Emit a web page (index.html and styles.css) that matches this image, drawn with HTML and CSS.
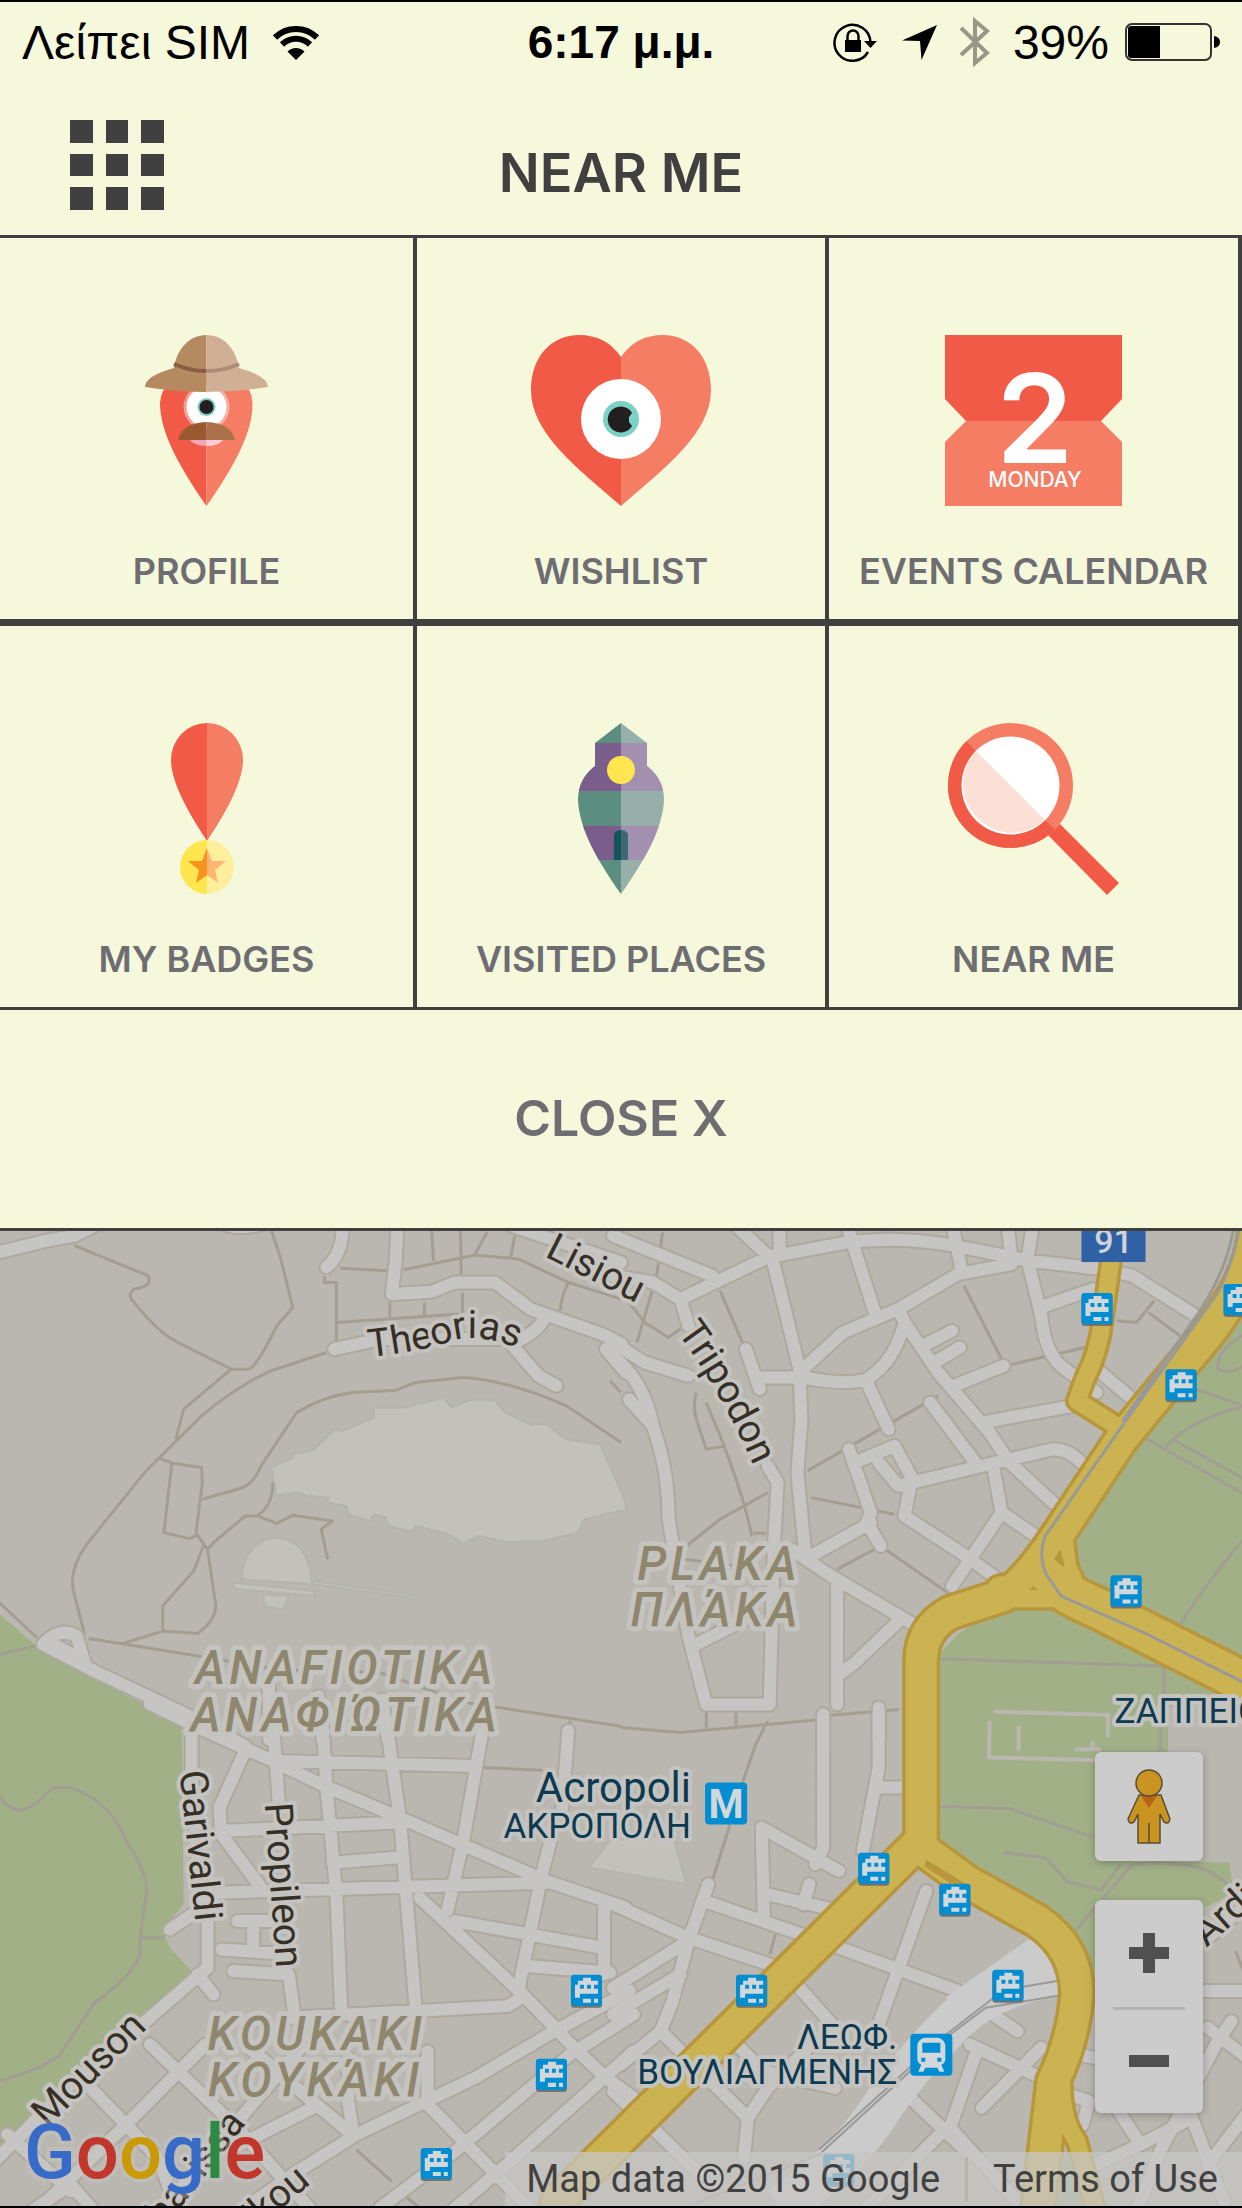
FILE: index.html
```html
<!DOCTYPE html>
<html lang="el">
<head>
<meta charset="utf-8">
<meta name="viewport" content="width=device-width, initial-scale=1">
<title>Near me</title>
<link rel="stylesheet" href="styles.css">
</head>
<body>
<div class="app">
  <div class="status">
    <div class="status-left">
      <span>Λείπει SIM</span>
      <svg class="wifi" width="48" height="36" viewBox="0 0 48 36" aria-hidden="true">
        <path d="M3 13.500A30 30 0 0 1 45 13.500M10 20.500A20 20 0 0 1 38 20.500" fill="none" stroke="#000" stroke-width="6"/>
        <path d="M24 36L15.500 27.500A12 12 0 0 1 32.500 27.500Z"/>
      </svg>
    </div>
    <div class="status-time">6:17 μ.μ.</div>
    <div class="status-right">
      <svg width="45" height="40" viewBox="0 0 45 40" aria-hidden="true">
        <path d="M35 30A18 18 0 1 1 37.500 20" fill="none" stroke="#000" stroke-width="2.500"/>
        <path d="M31 19H44L37.500 26Z"/>
        <rect x="12" y="18" width="16" height="12"/>
        <path d="M14.500 19V14a5.500 5.500 0 0 1 11 0V19" fill="none" stroke="#000" stroke-width="2.500"/>
      </svg>
      <svg class="arrow" width="35" height="35" viewBox="0 0 35 35" aria-hidden="true"><path d="M35 0L19.500 35L18 16L0 15.500Z"/></svg>
      <svg class="bt" width="32" height="54" viewBox="0 0 32 54" aria-hidden="true"><path d="M2 13L28 38L16 48V6L28 16L2 40" fill="none" stroke="#98988a" stroke-width="4"/></svg>
      <span>39%</span>
      <svg class="battery" width="95" height="38" viewBox="0 0 95 38" aria-hidden="true">
        <rect x="1" y="1" width="85" height="36" rx="6" fill="none" stroke="#333" stroke-width="2"/>
        <path d="M6 3H35V35H6Q3 35 3 32V6Q3 3 6 3ZM89 13Q95 14 95 19T89 25Z"/>
      </svg>
    </div>
  </div>

  <header class="header">
    <button class="menu-button" type="button" aria-label="Menu">
      <svg width="94" height="90" viewBox="0 0 94 90" fill="#404040" aria-hidden="true">
        <path d="M0 0h23v23H0zM36 0h22v23H36zM71 0h23v23H71zM0 34h23v22H0zM36 34h22v22H36zM71 34h23v22H71zM0 67h23v23H0zM36 67h22v23H36zM71 67h23v23H71z"/>
      </svg>
    </button>
    <h1>NEAR ME</h1>
  </header>

  <nav class="tiles">
    <a class="tile" href="#profile">
      <svg width="123" height="172" viewBox="0 0 123 172" aria-hidden="true">
        <path d="M61.500 171C35 133 15 98 15 68Q16 40 61.500 40Z" fill="#f15a47"/>
        <path d="M61.500 171C88 133 108 98 107.500 68Q107 40 61.500 40Z" fill="#f47d63"/>
        <circle cx="61.500" cy="72" r="23" fill="#fff" opacity=".4"/><circle cx="61.500" cy="72" r="20" fill="#fff"/>
        <circle cx="61.500" cy="72" r="9" fill="#7accbc"/><circle cx="61.500" cy="72" r="7" fill="#231f20"/>
        <path d="M44 104H79Q74 111 61.500 111T44 104Z" fill="#f3a6b8"/><path d="M61.500 104H79Q74 111 61.500 111Z" fill="#f8cdd6"/>
        <path d="M33 105Q37 88 61.500 87V105Z" fill="#995a30"/><path d="M90 105Q86 88 61.500 87V105Z" fill="#ab714b"/>
        <path d="M61.500 0C44 0 32 14 29 33Q0 41 0 52Q30 57 61.500 57Z" fill="#b68a60"/>
        <path d="M61.500 0C79 0 91 14 94 33Q123 41 123 52Q93 57 61.500 57Z" fill="#d0b094"/>
        <path d="M29 29Q44 36 61.500 36" fill="none" stroke="#8b5b46" stroke-width="4"/><path d="M61.500 36Q79 36 94 29" fill="none" stroke="#b08b7a" stroke-width="4"/>
      </svg>
      <span>PROFILE</span>
    </a>
    <a class="tile" href="#wishlist">
      <svg width="180" height="172" viewBox="0 0 180 172" aria-hidden="true">
        <path d="M90 171C45 132 0 98 0 55C0 20 22 0 48 0Q75 0 90 22Z" fill="#f15a47"/>
        <path d="M90 171C135 132 180 98 180 55C180 20 158 0 132 0Q105 0 90 22Z" fill="#f47d63"/>
        <circle cx="90" cy="84" r="40" fill="#fff"/><circle cx="90" cy="84" r="18" fill="#7ad2c5"/>
        <path d="M101 78A13 13 0 1 0 101 91L98 87V82Z" fill="#231f20"/>
      </svg>
      <span>WISHLIST</span>
    </a>
    <a class="tile" href="#events">
      <svg width="177" height="172" viewBox="0 0 177 172" aria-hidden="true">
        <path d="M0 0H177V64L156 86H21L0 64Z" fill="#f15a47"/><path d="M21 86H156L177 107V171H0V107Z" fill="#f47d63"/>
        <text class="date-number" x="90" y="128">2</text><text class="date-day" x="90" y="152">MONDAY</text>
      </svg>
      <span>EVENTS CALENDAR</span>
    </a>
    <a class="tile" href="#badges">
      <svg width="72" height="172" viewBox="0 0 72 172" aria-hidden="true">
        <path d="M36 118C16 88 0 58 0 37A36 37 0 0 1 36 0Z" fill="#f15a47"/><path d="M36 118C56 88 72 58 72 37A36 37 0 0 0 36 0Z" fill="#f47d63"/>
        <path d="M36 117A27 27 0 0 0 36 171Z" fill="#ffe54e"/><path d="M36 117A27 27 0 0 1 36 171Z" fill="#ffee9b"/>
        <path d="M36 125V152L25 160L28 147L17 138H31Z" fill="#f7921e"/><path d="M36 125V152L47 160L44 147L55 138H41Z" fill="#fcb673"/>
      </svg>
      <span>MY BADGES</span>
    </a>
    <a class="tile" href="#visited">
      <svg width="86" height="172" viewBox="0 0 86 172" aria-hidden="true">
        <defs><clipPath id="tower"><path d="M43 0L69 20V43Q86 56 86 77C85 106 65 140 43 171C21 140 1 106 0 77Q0 56 17 43V20Z"/></clipPath></defs>
        <g clip-path="url(#tower)">
          <path d="M0 0H43V172H0Z" fill="#5b8d80"/><path d="M43 0H86V172H43Z" fill="#97afa9"/>
          <path d="M0 20H43V68H0ZM0 103H43V137H0Z" fill="#7b5d8c"/><path d="M43 20H86V68H43ZM43 103H86V137H43Z" fill="#a38fb0"/>
        </g>
        <circle cx="43" cy="47" r="14" fill="#ffe54e"/><path d="M36 137V112Q37 107 43 107V137Z" fill="#14535d"/><path d="M50 137V112Q49 107 43 107V137Z" fill="#3d6974"/>
      </svg>
      <span>VISITED PLACES</span>
    </a>
    <a class="tile" href="#near">
      <svg width="171" height="172" viewBox="0 0 171 172" aria-hidden="true">
        <path d="M112 101L171 160L159 172L100 112Z" fill="#f15a47"/>
        <circle cx="62.500" cy="62.500" r="62.500" fill="#f47d63"/><path d="M18.300 18.300A62.500 62.500 0 0 0 106.700 106.700Z" fill="#f15a47"/>
        <circle cx="62.500" cy="62.500" r="49" fill="#fff"/><path d="M27.900 27.900A49 49 0 0 0 97.100 97.100Z" fill="#fde0d5"/>
      </svg>
      <span>NEAR ME</span>
    </a>
  </nav>

  <button class="close" type="button">CLOSE X</button>

  <section class="map" aria-label="Map">
    <svg class="map-canvas" viewBox="0 0 1242 974" preserveAspectRatio="xMidYMin slice">
      <defs>
        <g id="roads">
          <g transform="translate(0 -12) scale(.39605 .33333)">
            <path d="M-20 105L120 65L190 50L290 -10M560 10Q600 40 680 10M865 0C870 80 850 120 825 145M1005 0L1000 120L990 225L1090 218L1150 190H1250L1340 270L1520 345L1570 375M1375 290Q1370 330 1300 370M845 390L960 360L1280 360L1360 470L1405 500M1290 20L1568 130M1530 390L1580 460"/>
            <path d="M215 1330L195 1250Q150 1220 110 1275L240 1355L480 1490L620 1580M130 1270L190 1310"/>
            <path d="M680 1400V1560M805 1430L815 1560M965 1440L980 1560"/>
          </g>
          <g transform="translate(621 -12) scale(.39605 .33333)">
            <path d="M-20 50L230 170M290 20L370 110M400 0V100M-20 170L80 190L150 240L370 115L570 70Q700 50 840 80L1030 125L1210 150L1290 170L1450 290M570 20L640 280M835 10L860 160M975 20L985 120M1040 10L1025 120L1060 290Q1070 410 1120 450L1200 520M380 110L450 450L455 600L445 760L465 1010M150 240L170 320M-20 370L60 430L170 470M450 460L560 340L700 270L850 165L985 135M700 270L715 310L800 460L930 640L980 730L1090 850M715 310Q690 430 620 480Q570 500 460 475L350 475M315 390L350 510M770 375L835 335M790 430L855 385M840 500L965 440M620 490L675 630M780 550L900 740M910 610L1140 560M575 690L630 880L620 910L655 980M590 730L690 680L740 790M650 730L700 800L980 720L1090 690Q1130 690 1160 730M730 800L715 890L870 1010L950 1080M940 750L960 880L1040 945M960 880L835 1100M480 1010L630 910M1070 260L1190 210M1210 460L1280 530M-20 410Q60 490 80 620L20 540M80 620Q120 750 120 900L170 1250L215 1455H375L385 1000L395 790L370 740M430 990L530 1070L745 1220M545 1090V1455M545 1370L590 1330L700 1205M180 1280L330 1190M510 1500V1600M650 1480V1560"/>
          </g>
          <g transform="translate(0 476) scale(.39605 .33333)">
            <path d="M380 -10L520 70L690 160L820 235L1000 325L1380 520L1580 600M485 50V200L500 450L525 620V780L360 950L180 1130L-20 1370M690 40L705 290M620 130L555 300L560 380L660 540M700 160L1200 175M815 40L825 240L850 560L862 900M975 40L1010 330L1050 900M1220 60L1170 400L1130 610M560 370L1000 345M840 465L1000 450M550 555L1380 525M430 665L500 610M500 800L540 860M600 640H700M640 640V720M560 725L740 740M590 790L730 800L745 930M730 930L1280 895Q1330 870 1310 840L1360 550M1060 570L1320 860L1450 1020L1530 1110L1600 1170M1150 640L1520 720M1330 775L1540 795M1435 70L1420 300M1390 400L1360 540M1525 600V800M1590 850L1400 970L1200 1110L900 1280L740 1400L620 1500M1600 920L1440 1040L1150 1330L960 1500M1600 1030L1270 1380L1140 1510M380 1010L600 1260L790 1510M520 1010L320 1250L120 1480M230 1140L400 1350L450 1510M640 1030L800 1190L890 1280M880 1050V1180L890 1260M760 1020L450 1450M590 1320L790 1200M1080 1030V1190L1370 1540M180 1430L240 1510M20 1280L180 1450M180 1430L80 1510"/>
          </g>
          <g transform="translate(621 476) scale(.39605 .33333)">
            <path d="M510 20V420L490 470M650 0V180L610 430M650 240H720M550 490L355 360L360 620M370 560L550 610M475 530L460 590M220 530L170 700L130 880L100 970L0 1070M-20 590L170 690L400 780M210 580L480 690M170 700L-20 840M150 800L-20 920M100 970L320 1230L310 1350M320 1230L370 1140L480 1010M-20 1150L40 1220M80 1260L200 1400M770 550L650 950M550 720L850 850L1000 970M450 840L540 960M300 1020L360 1090L540 1140M900 1020L830 1260L1000 1480M910 1200L1060 1020M730 1170L880 1340M820 1260L620 1500M880 1010L1060 1110M1130 1160L1180 1180L1165 1250M1150 1040L1240 1060M1470 700L1570 600M1440 850H1590M1540 940L1500 1010L1360 1330L1300 1510M1480 960L1590 1060M1250 1200L1310 1310L1180 1380M1310 1310L1440 1230L1520 1480M1590 1200L1480 1370"/>
          </g>
        </g>
        <g id="main-roads">
          <g transform="translate(621 -12) scale(.39605 .33333)">
            <path class="wide" d="M1600 30C1590 150 1550 230 1490 330L1400 460L1262 660L1100 950Q1010 1110 960 1130L830 1180Q755 1230 757 1330V1870"/>
            <path class="wide" d="M960 1117H1130L1180 1150"/>
            <path class="wide" d="M1100 960L1110 1050L1145 1140"/>
            <path class="broad" d="M1110 1110Q1150 1140 1200 1165L1600 1405"/>
            <path class="narrow" d="M1240 90L1215 300Q1205 400 1170 480L1150 545L1250 620"/>
          </g>
          <g transform="translate(621 476) scale(.39605 .33333)">
            <path class="wide" d="M755 400L-160 1480"/>
            <path class="wide" d="M755 420L870 520L1050 640Q1150 720 1150 860Q1140 1000 1090 1120L1050 1520"/>
            <path class="narrow" d="M1115 1050Q1100 1220 1150 1300L1200 1520"/>
          </g>
        </g>
        <g id="tram">
          <rect width="31" height="32" y="1" rx="3" fill="#75736e"/><rect width="31" height="31" rx="3" fill="#008dd2"/>
          <path fill="#d2d8da" fill-rule="evenodd" d="M12 3h8v3h7v13H9v4H4V10h3V6h5zM9 10v4h4v-4zM16 10v4h4v-4zM23 10v4h4v-4zM12 24h8v4h-8zM23 24h4v4h-4z"/>
        </g>
      </defs>
      <rect width="1242" height="974" fill="#bab7b0"/>
      <g fill="#a1b087">
        <path transform="translate(0 476) scale(.39605 .33333)" d="M-10 -290L90 -189L130 -155L460 50L465 590L410 665L430 720L485 790L360 930L60 1260L-10 1350Z"/>
        <path transform="translate(621 -12) scale(.39605 .33333)" d="M1580 260L1290 690L1135 930L1150 1050L1180 1100L1580 1360Z"/>
        <path transform="translate(621 476) scale(.39605 .33333)" d="M780 -130L850 -220L980 -320L1130 -320L1560 -45L1380 0V460L1535 465L1545 560L1470 600L1200 800L1130 650L780 400ZM1085 1230L1180 1500H1070Z"/>
      </g>
      <g class="building">
        <path transform="translate(0 -12) scale(.39605 .33333)" d="M685 745L740 715V705L790 695L845 630L865 635L945 595V565H1020L1120 535L1140 565L1190 542H1250L1275 580L1340 615H1380L1430 660L1515 675L1570 820L1585 870L1530 885L1475 900L1460 940L1370 965L1280 968L1210 950L1170 972L1125 942L1050 920L1040 937L980 920L975 895L945 885L935 905L880 885L875 860L830 850V835L775 830L755 820L700 828ZM610 1080Q620 960 700 955Q780 960 790 1095ZM592 1090L795 1115V1130L592 1108ZM790 1085L1060 1130V1138L790 1095ZM665 1125L730 1130L715 1170L670 1160Z"/>
        <path transform="translate(621 476) scale(.39605 .33333)" d="M-30 400L130 380L165 530L-80 480Z"/>
      </g>
      <g class="paths">
        <g transform="translate(0 -12) scale(.39605 .33333)">
          <path d="M190 80L375 170Q390 200 340 210Q320 230 340 250Q400 340 450 370L585 450H630Q650 440 700 320L740 265L710 120L685 30M585 450L465 570L445 660M820 170V190H850V390M825 400L685 455Q600 500 510 590L370 755L220 975Q170 1060 190 1130L215 1245M400 715L440 733L510 745L512 790L495 950L480 958L415 940L435 733M512 840L600 810Q640 800 660 740L750 580Q820 530 890 520L1000 513L1050 490L1170 475Q1290 485 1430 560L1568 670M690 790Q690 860 650 890H620L545 965L525 990L495 940M650 890L700 912L740 888L840 905L812 930L828 1020M515 980L490 1055L412 1160V1235L500 1242Q550 1200 545 1150L525 990M412 1235L310 1273L225 1257M310 1273L500 1310L700 1350L960 1360L1180 1450L1568 1520M0 1150L95 1255M0 1305L90 1280M860 148L980 155M1020 152L1200 108L1310 120L1435 190L1568 240M1090 30L1095 125M1163 30L1165 165M1230 40L1200 105M1300 50L1290 115M1435 190Q1415 240 1415 275M850 310L1160 285M985 250V300M1072 250V290M1168 220V280M1540 485L1568 520"/>
        </g>
        <g transform="translate(621 -12) scale(.39605 .33333)">
          <path d="M105 40L90 170L40 370M0 220L60 310L120 355L150 330M250 215L310 380M190 520Q180 560 190 600L215 690L265 680M215 550L250 650Q310 830 330 950M370 820L250 900L165 980M335 942H365M160 1020L350 1050M480 835L690 885M470 755L800 530M545 1050L655 980L830 1125M865 200L960 420M970 440L1170 385M1250 305L1300 310L1345 245M1330 280L1410 350M1320 655L1580 830M1390 660L1590 790M1370 690Q1420 610 1570 560L1450 510M1580 340Q1500 390 1505 450Q1540 470 1580 430M1580 950Q1520 1020 1410 1215M800 1318L1370 1340V1430M500 1490L700 1470"/>
        </g>
        <g transform="translate(0 476) scale(.39605 .33333)">
          <path d="M0 265Q40 340 100 280L135 240H180Q280 280 320 400Q380 510 370 560L355 690V740Q340 800 240 885L150 1045Q110 1080 0 1120M355 690H415M1220 180L1370 188M1440 40L1435 70M900 1325L990 1420M1020 1460L1060 1500"/>
        </g>
        <g transform="translate(621 476) scale(.39605 .33333)">
          <path d="M0 60L150 75L510 35M215 0V60M290 10V55M370 40L340 110L305 230M275 350L230 520M390 680L375 740M800 297L980 303L1195 390M965 435L1070 450L1125 520L1210 548L1260 470M1145 670L1290 470Q1480 450 1535 540M1360 40V130M1550 730L1590 850"/>
        </g>
      </g>
      <path class="grounds" transform="translate(621 476) scale(.39605 .33333)" d="M940 12L1228 22V90M930 40L928 150L1210 158M1003 55V130M1145 125H1210M1190 100V130"/>
      <use href="#roads" class="casing"/>
      <use href="#roads" class="street"/>
      <g transform="translate(621 476) scale(.39605 .33333)">
        <path class="yard" d="M1130 800Q950 820 850 930Q720 1080 640 1230Q560 1370 400 1500M1090 720L850 920"/>
        <path class="rail" d="M1000 840L1195 800M1195 845L920 900L830 980L500 1340L180 1490M1000 840L940 870L820 980L500 1325"/>
      </g>
      <use href="#main-roads" class="main-casing"/>
      <use href="#main-roads" class="main-street"/>
      <path transform="translate(621 -12) scale(.39605 .33333)" fill="#b8963c" d="M1108 990L1120 1045L1092 1020ZM1040 1100L1052 1112H1030ZM770 1920L880 2000L830 1990L765 1940Z"/>
      <g transform="translate(621 -12) scale(.39605 .33333)"><path class="rail tramline" d="M1560 30Q1530 180 1500 230L1270 610L1070 950Q1050 1010 1075 1070L1110 1130L1320 1240L1590 1400M1545 30Q1525 170 1440 310L1265 605"/></g>
      <rect x="1081" y="-10" width="64" height="41" fill="#2f61a4"/>
      <text class="route" x="1113" y="22">91</text>
      <use href="#tram" x="1081" y="62"/><use href="#tram" x="1223" y="53"/><use href="#tram" x="1165" y="138"/><use href="#tram" x="1110" y="344"/>
      <use href="#tram" x="858" y="621"/><use href="#tram" x="939" y="652"/><use href="#tram" x="736" y="743"/><use href="#tram" x="992" y="738"/><use href="#tram" x="823" y="922"/>
      <use href="#tram" x="571" y="743"/><use href="#tram" x="536" y="827"/><use href="#tram" x="421" y="916"/>
      <rect x="705" y="551" width="42" height="42" rx="4" fill="#008dd2"/><text class="metro" x="726" y="586">M</text>
      <g transform="translate(910 802)"><rect width="42" height="42" rx="4" fill="#008dd2"/><path fill="#d2d8da" fill-rule="evenodd" d="M14 4h14q7 2 7 9v12q0 4-4 6l3 7h-5l-2-4H15l-2 4H8l3-7q-4-2-4-6V13q0-7 7-9zM12 9v10h18V9zM11 24v4h4v-4zM27 24v4h4v-4z"/></g>

      <path id="theorias" d="M369 126Q425 120 452 110Q480 100 530 122" fill="none"/>
      <text class="street-name"><textPath href="#theorias">Theorias</textPath></text>
      <text class="street-name" transform="translate(544 25) rotate(27)">Lisiou</text>
      <path id="tripodon" d="M677 101Q728 170 764 260" fill="none"/>
      <text class="street-name"><textPath href="#tripodon">Tripodon</textPath></text>
      <text class="street-name" transform="translate(180 540) rotate(84)">Garivaldi</text>
      <text class="street-name" transform="translate(265 572) rotate(86)">Propileon</text>
      <text class="street-name" transform="translate(48 896) rotate(-45)">Mouson</text>
      <text class="street-name" transform="translate(256 998) rotate(-40)">ikou</text>
      <text class="street-name" transform="translate(165 996) rotate(-52)">ha&nbsp;&nbsp;issa</text>
      <text class="street-name" transform="translate(1206 716) rotate(-42)">Ardi</text>
      <g class="district">
        <text x="719" y="349">PLAKA</text><text x="716" y="395">ΠΛΆΚΑ</text>
        <text x="346" y="453">ANAFIOTIKA</text><text x="346" y="499">ΑΝΑΦΙΏΤΙΚΑ</text>
        <text x="317" y="818">KOUKAKI</text><text x="316" y="864">ΚΟΥΚΆΚΙ</text>
      </g>
      <g class="place">
        <text class="big" x="691" y="570">Acropoli</text><text x="691" y="606">ΑΚΡΟΠΟΛΗ</text>
        <text x="897" y="817">ΛΕΩΦ.</text><text x="897" y="852">ΒΟΥΛΙΑΓΜΕΝΗΣ</text>
        <text class="start" x="1114" y="491">ΖΑΠΠΕΙΟ</text>
      </g>
    </svg>

    <div class="map-controls">
      <button class="control pegman" type="button" aria-label="Street View">
        <svg width="44" height="76" viewBox="0 0 44 76" aria-hidden="true">
          <path d="M12 26L1 50Q2 56 7 53L11 45V74H33V45L37 53Q42 56 43 50L34 26Z" fill="#c99520" stroke="#594c32" stroke-width="1.500"/>
          <path d="M22 54V74" stroke="#594c32" stroke-width="1.500"/><path d="M14 27H30L22 39Z" fill="#b86318"/>
          <circle cx="22" cy="14" r="13" fill="#c99520" stroke="#594c32" stroke-width="1.500"/>
        </svg>
      </button>
      <div class="control zoom">
        <button type="button" aria-label="Zoom in"><svg width="40" height="40" viewBox="0 0 40 40"><path d="M14 0H26V14H40V26H26V40H14V26H0V14H14Z" fill="#505050"/></svg></button>
        <button type="button" aria-label="Zoom out"><svg width="40" height="12" viewBox="0 0 40 12"><path d="M0 0H40V12H0Z" fill="#505050"/></svg></button>
      </div>
    </div>
    <div class="google"><span class="blue">G</span><span class="red">o</span><span class="yellow">o</span><span class="blue">g</span><span class="green">l</span><span class="red">e</span></div>
    <div class="attribution"><span>Map data ©2015 Google</span><a href="#terms">Terms of Use</a></div>
  </section>
</div>
</body>
</html>
```
FILE: styles.css
```css
* { box-sizing: border-box; }

body { margin: 0; background: #f6f8dc; font-family: "Liberation Sans", sans-serif; }

button { padding: 0; border: 0; background: none; color: inherit; font: inherit; cursor: pointer; }
a { color: inherit; text-decoration: none; }
svg { display: block; }

.app { display: flex; flex-direction: column; min-height: 100vh; border-top: 2px solid #000; border-bottom: 2px solid #000; }

.status { display: grid; grid-template-columns: 1fr auto 1fr; align-items: center; height: 80px; padding: 0 22px; font-size: 48px; color: #000; }
.status-left, .status-right { display: flex; align-items: center; }
.status-left { gap: 22px; }
.status-time { font-size: 46px; font-weight: 700; }
.status-right { justify-content: flex-end; }
.arrow { margin: 0 22px 0 24px; }
.bt { margin-right: 22px; }
.battery { margin-left: 16px; }

.header { display: grid; grid-template-columns: 1fr auto 1fr; align-items: center; height: 153px; padding: 0 70px; }
.menu-button { justify-self: start; padding-top: 12px; }
.header h1 { margin: 0; padding-top: 28px; font: 600 54px/60px Inter, sans-serif; color: #404040; }

.tiles { display: grid; grid-template-columns: 417fr 412fr 413fr; border-top: 3px solid #404040; border-bottom: 3px solid #404040; }
.tile { display: flex; flex-direction: column; align-items: center; gap: 42px; height: 381px; padding-top: 97px; border-right: 4px solid #404040; font: 600 36px/44px Inter, sans-serif; color: #6e6d72; white-space: nowrap; }
.tile:nth-child(n+4) { height: 388px; border-top: 7px solid #404040; }
.date-number { font: 600 124px Inter, sans-serif; fill: #fff; text-anchor: middle; }
.date-day { font: 500 21px Inter, sans-serif; fill: #fff; text-anchor: middle; }

.close { height: 221px; padding-bottom: 2px; border-bottom: 3px solid #404040; font: 600 50px/60px Inter, sans-serif; color: #6e6d72; }

.map { position: relative; flex: 1; min-height: 400px; overflow: hidden; background: #bab7b0; }
.map-canvas { position: absolute; inset: 0; width: 100%; height: 100%; font-family: Roboto, sans-serif; }
.map-canvas path { vector-effect: non-scaling-stroke; }
.building { fill: #c2c2ba; stroke: #b4b4ae; stroke-width: 2px; }
.paths { fill: none; stroke: #a29e93; stroke-width: 3px; stroke-linejoin: round; }
.grounds { fill: none; stroke: #bab7b0; stroke-width: 4px; }
.casing, .street, .main-casing, .main-street { fill: none; stroke-linecap: round; stroke-linejoin: round; }
.casing { stroke: #ada99f; stroke-width: 16px; }
.street { stroke: #c7c5c3; stroke-width: 12px; }
.yard { fill: none; stroke: #cbcbcb; stroke-width: 42px; }
.rail { fill: none; stroke: #999; stroke-width: 2px; }
.tramline { stroke-width: 3px; }
.main-casing { stroke: #b8963c; --broad: 46px; --wide: 38px; --narrow: 24px; }
.main-street { stroke: #cbb351; --broad: 39px; --wide: 31px; --narrow: 17px; }
.broad { stroke-width: var(--broad); }
.wide { stroke-width: var(--wide); }
.narrow { stroke-width: var(--narrow); }

.map-canvas text { paint-order: stroke; stroke-linejoin: round; }
.street-name { font-size: 39px; fill: #362f26; stroke: #c5c3c0; stroke-width: 8px; }
.district { font-size: 47px; font-weight: 500; font-style: italic; letter-spacing: 4px; fill: #8f866e; stroke: #c5c3c0; stroke-width: 10px; text-anchor: middle; }
.place { font-size: 35px; fill: #0c3a50; stroke: #c5c3c0; stroke-width: 8px; text-anchor: end; }
.place .big { font-size: 42px; }
.place .start { text-anchor: start; }
.map-canvas .route { font-size: 34px; font-weight: 500; fill: #d0d4d8; text-anchor: middle; }
.map-canvas .metro { font-size: 40px; font-weight: 700; fill: #d2d8da; text-anchor: middle; }

.map-controls { position: absolute; right: 39px; bottom: 93px; display: flex; flex-direction: column; gap: 39px; width: 108px; }
.control { border-radius: 6px; background: #cccccc; box-shadow: 0 2px 8px rgba(0, 0, 0, .25); }
.pegman { display: grid; place-items: center; height: 109px; }
.zoom { display: grid; grid-template-rows: 1fr 1fr; height: 213px; padding: 0 18px; }
.zoom button { display: grid; place-items: center; }
.zoom button + button { border-top: 3px solid #b4b4b4; }

.google { position: absolute; left: 24px; bottom: 14px; font: 500 76px/80px Roboto, sans-serif; -webkit-text-stroke: 8px rgba(200, 198, 195, .4); paint-order: stroke; }
.blue { color: #376bc8; }
.red { color: #c1372b; }
.yellow { color: #ca9a05; }
.green { color: #2b8a43; }

.attribution { position: absolute; right: 0; bottom: 0; display: flex; align-items: center; gap: 25px; height: 54px; padding: 0 24px 0 21px; background: rgba(199, 198, 196, .75); font: 38px/44px Roboto, sans-serif; color: #414141; }
.attribution a { padding-left: 25px; border-left: 3px solid #b5b2ac; }
```
